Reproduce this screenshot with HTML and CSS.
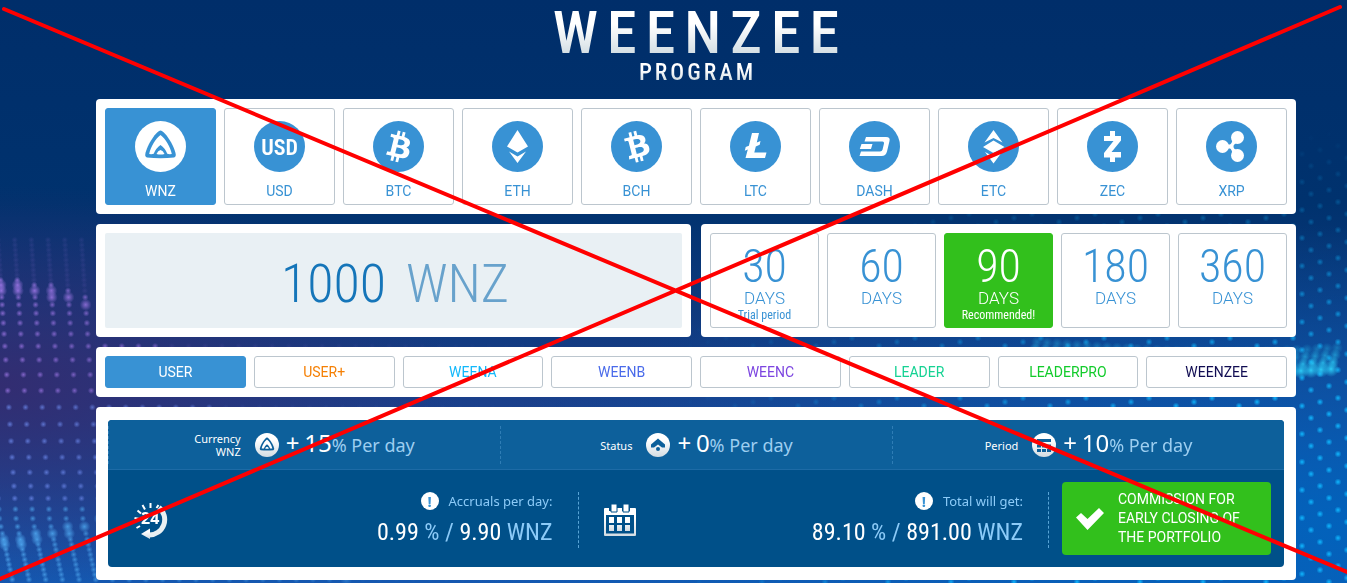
FILE: index.html
```
<!DOCTYPE html>
<html lang="en">

<head>
    <meta charset="UTF-8">
    <meta name="viewport" content="width=device-width, initial-scale=1.0">
    <title>Weenzee Program</title>
    <link rel="stylesheet" href="styles.css">
</head>

<body>
    <canvas class="dots" id="dots"></canvas>

    <!-- Shared shapes -->
    <svg class="defs" width="0" height="0" aria-hidden="true">
        <defs>
            <linearGradient id="silver" x1="0" y1="0" x2="0" y2="1">
                <stop offset="0.3" stop-color="#fff" />
                <stop offset="1" stop-color="#d3dce2" />
            </linearGradient>
            <path id="bitcoin" d="M23.189 14.02c.314-2.096-1.283-3.223-3.465-3.975l.708-2.84-1.728-.43-.69 2.765c-.454-.114-.92-.22-1.385-.326l.695-2.783L15.596 6l-.708 2.839c-.376-.086-.746-.17-1.104-.26l.002-.009-2.384-.595-.46 1.846s1.283.294 1.256.312c.7.175.826.638.805 1.006l-.806 3.235c.048.012.11.03.18.057l-.183-.045-1.13 4.532c-.086.212-.303.531-.793.41.018.025-1.256-.313-1.256-.313l-.858 1.978 2.25.561c.418.105.828.215 1.231.318l-.715 2.872 1.727.43.708-2.84c.472.127.93.245 1.378.357l-.706 2.828 1.728.43.715-2.866c2.948.558 5.164.333 6.097-2.333.752-2.146-.037-3.385-1.588-4.192 1.13-.26 1.98-1.003 2.207-2.538zm-3.95 5.538c-.533 2.147-4.148.986-5.32.695l.95-3.805c1.172.293 4.929.872 4.37 3.11zm.535-5.569c-.487 1.953-3.495.96-4.47.717l.86-3.45c.975.243 4.118.696 3.61 2.733z" />
            <g id="weenzee">
                <path class="mark" d="M25.5 9.500C21.500 9.500 12 24 10.300 33Q9.800 36 12 36.400Q25.500 38 39 36.400Q41.200 36 40.700 33C39 24 29.500 9.500 25.500 9.500Z" />
                <path class="hole" d="M25.500 14C21 17 15.500 26 14.200 33Q17 33.400 18.700 32.800Q21 27 25.500 24Q30 27 32.300 32.800Q34 33.400 36.800 33C35.500 26 30 17 25.500 14Z" />
                <path class="hole" d="M21.500 33Q23 29.500 25.500 29Q28 29.500 29.500 33Q25.500 34 21.500 33Z" />
            </g>
        </defs>
    </svg>

    <header class="header">
        <h1 class="title">WEENZEE</h1>
        <p class="subtitle">PROGRAM</p>
    </header>

    <main class="calc">
        <!-- Currency -->
        <section class="panel coins">
            <button type="button" class="option coin active">
                <svg class="coin-icon" viewBox="0 0 51 51"><circle cx="25.5" cy="25.5" r="25.5" /><use href="#weenzee" /></svg>
                WNZ
            </button>
            <button type="button" class="option coin">
                <svg class="coin-icon" viewBox="0 0 51 51"><circle cx="25.5" cy="25.5" r="25.5" /><text class="mark" x="25.5" y="34" text-anchor="middle">USD</text></svg>
                USD
            </button>
            <button type="button" class="option coin">
                <svg class="coin-icon" viewBox="0 0 32 32"><circle cx="16" cy="16" r="16" /><use class="mark" href="#bitcoin" /></svg>
                BTC
            </button>
            <button type="button" class="option coin">
                <svg class="coin-icon" viewBox="0 0 51 51"><circle cx="25.5" cy="25.5" r="25.5" /><path class="mark" d="M25.5 9L36 25.500L25.500 31.500L15 25.500ZM17 30.500L25.500 35.500L34 30.500L25.500 42Z" /></svg>
                ETH
            </button>
            <button type="button" class="option coin">
                <svg class="coin-icon" viewBox="0 0 32 32"><circle cx="16" cy="16" r="16" /><use class="mark" href="#bitcoin" transform="rotate(-28 16 16)" /></svg>
                BCH
            </button>
            <button type="button" class="option coin">
                <svg class="coin-icon" viewBox="0 0 51 51"><circle cx="25.5" cy="25.5" r="25.5" /><path class="mark" d="M22 12H29L26.800 21.500L30.500 20L29.700 23.800L25.800 25.500L24.300 31.500H36.500L35 37H15.500L17.800 28.500L14.800 29.700L15.700 26L18.900 24.700Z" /></svg>
                LTC
            </button>
            <button type="button" class="option coin">
                <svg class="coin-icon" viewBox="0 0 51 51"><circle cx="25.5" cy="25.5" r="25.5" /><path class="mark" d="M17 16H37Q41.500 16 40.500 20L38 30.500Q36.800 35 32.500 35H10.500L12 30.500H31Q33 30.500 33.500 28.800L35 22.500Q35.300 20.600 33.500 20.600H15.500ZM12.500 23H23.500L22 28H10.800Z" /></svg>
                DASH
            </button>
            <button type="button" class="option coin">
                <svg class="coin-icon" viewBox="0 0 51 51"><circle cx="25.5" cy="25.5" r="25.5" /><path class="mark" d="M25.500 9L34.500 21.500L25.500 17L16.500 21.500ZM25.500 19.500L36.500 26L25.500 32L15 26ZM17 31L25.500 35.500L34 31L25.500 42.500Z" /></svg>
                ETC
            </button>
            <button type="button" class="option coin">
                <svg class="coin-icon" viewBox="0 0 51 51"><circle cx="25.5" cy="25.5" r="25.5" /><path class="mark" d="M23 10H28V15H34V19.500L24.500 31H34V36.500H28V41H23V36.500H17V32L26.500 20H17V15H23Z" /></svg>
                ZEC
            </button>
            <button type="button" class="option coin">
                <svg class="coin-icon" viewBox="0 0 51 51"><circle cx="25.5" cy="25.5" r="25.5" /><g class="mark"><circle cx="16.500" cy="25.500" r="6.500" /><circle cx="31.500" cy="16.500" r="6.500" /><circle cx="31.500" cy="34.500" r="6.500" /><path d="M20 23.500H24Q26 22.500 26.500 18L31 22Q27.500 23 27.500 25.500Q27.500 28 31 29L26.500 33Q26 28.500 24 27.500H20Z" /></g></svg>
                XRP
            </button>
        </section>

        <div class="split">
            <!-- Amount -->
            <section class="panel">
                <label class="amount">
                    <input type="text" class="amount-value" value="1000" size="4" aria-label="Amount">
                    <span class="amount-unit">WNZ</span>
                </label>
            </section>

            <!-- Period -->
            <section class="panel periods">
                <button type="button" class="option period"><b>30</b><span>DAYS</span><small>Trial period</small></button>
                <button type="button" class="option period"><b>60</b><span>DAYS</span></button>
                <button type="button" class="option period recommended"><b>90</b><span>DAYS</span><small>Recommended!</small></button>
                <button type="button" class="option period"><b>180</b><span>DAYS</span></button>
                <button type="button" class="option period"><b>360</b><span>DAYS</span></button>
            </section>
        </div>

        <!-- Status -->
        <section class="panel statuses">
            <button type="button" class="option status active">USER</button>
            <button type="button" class="option status user-plus">USER+</button>
            <button type="button" class="option status weena">WEENA</button>
            <button type="button" class="option status weenb">WEENB</button>
            <button type="button" class="option status weenc">WEENC</button>
            <button type="button" class="option status leader">LEADER</button>
            <button type="button" class="option status leaderpro">LEADERPRO</button>
            <button type="button" class="option status weenzee">WEENZEE</button>
        </section>

        <!-- Result -->
        <section class="panel result-panel">
            <div class="result">
                <div class="rates">
                    <div class="rate">
                        <span class="rate-name">Currency<br>WNZ</span>
                        <svg class="rate-icon" viewBox="0 0 51 51"><circle cx="25.5" cy="25.5" r="25.5" /><use href="#weenzee" /></svg>
                        <span class="rate-value">+ <b>15</b>% Per day</span>
                    </div>
                    <div class="rate">
                        <span class="rate-name">Status</span>
                        <svg class="rate-icon" viewBox="0 0 24 24"><circle cx="12" cy="12" r="12" /><path class="mark" d="M12 5.500L19 11.500V14.500H16L12 11.500L8 14.500H5V11.500Z" /><circle class="mark" cx="12" cy="16" r="2" /></svg>
                        <span class="rate-value">+ <b>0</b>% Per day</span>
                    </div>
                    <div class="rate">
                        <span class="rate-name">Period</span>
                        <svg class="rate-icon" viewBox="0 0 24 24"><circle cx="12" cy="12" r="12" /><path class="mark" d="M5 6H19V9H5ZM5 11.500H9V14.500H5ZM10 11.500H14V14.500H10ZM15 11.500H19V14.500H15ZM5 16H9V19H5ZM10 16H14V19H10ZM15 16H19V19H15Z" /></svg>
                        <span class="rate-value">+ <b>10</b>% Per day</span>
                    </div>
                </div>

                <div class="totals">
                    <div class="total">
                        <svg class="total-icon" viewBox="0 0 36 38">
                            <path class="ray" d="M17.500 2V7M9.500 4L12 8.500M25.500 4L23.500 7M4.500 9.500L8 12.500M1.500 17L6.500 18M3.500 27L7 25" />
                            <path class="ring" d="M26 6.500A15.500 15.500 0 0 1 16 34" />
                            <path fill="url(#silver)" d="M17 27.500V38L8 33Z" />
                            <text x="8" y="23">24</text>
                        </svg>
                        <div class="total-text">
                            <p class="total-name"><i class="info">!</i>Accruals per day:</p>
                            <p class="total-value"><b>0.99</b> % / <b>9.90</b> WNZ</p>
                        </div>
                    </div>
                    <div class="total">
                        <svg class="total-icon calendar" viewBox="0 0 32 32">
                            <path fill="url(#silver)" fill-rule="evenodd" d="M0 5Q0 4 1 4H5V7H13V4H18V7H26V4H31Q32 4 32 5V31Q32 32 31 32H1Q0 32 0 31ZM2 11V29.500H30V11Z" />
                            <path fill="#fff" stroke="#005089" d="M7 0H13V8H7ZM19 0H25V8H19Z" />
                            <path fill="url(#silver)" d="M5 13H10V19H5ZM13 13H18V19H13ZM21 13H26V19H21ZM5 21H10V27H5ZM13 21H18V27H13ZM21 21H26V27H21Z" />
                        </svg>
                        <div class="total-text">
                            <p class="total-name"><i class="info">!</i>Total will get:</p>
                            <p class="total-value"><b>89.10</b> % / <b>891.00</b> WNZ</p>
                        </div>
                    </div>
                    <button type="button" class="commission">
                        <svg class="check" viewBox="0 0 28 22"><path d="M0 9.500L5 5L11.500 11L23 0L28 5L11.500 22Z" /></svg>
                        <span>COMMISSION FOR EARLY CLOSING OF THE PORTFOLIO</span>
                    </button>
                </div>
            </div>
        </section>
    </main>

    <!-- Crossed out -->
    <svg class="cross" viewBox="0 0 1347 583" preserveAspectRatio="none" aria-hidden="true">
        <path d="M4 9L1347 572M1340 7L0 579" />
    </svg>

    <script src="script.js"></script>
</body>

</html>
```
FILE: styles.css
```
:root {
    --blue: #3892d4;
    --green: #32c01c;
    --line: #bcc6ce;
    --pale: #8ccbf8;
    --silver: linear-gradient(#fff 35%, #cfdbe1 90%);
    --mark: #3892d4;
    --narrow: "Roboto Condensed", Roboto, sans-serif;
    --label: Roboto, sans-serif;
    --text: "Noto Sans", sans-serif;
}

* {
    margin: 0;
    padding: 0;
    box-sizing: border-box;
}

body {
    position: relative;
    min-height: 100vh;
    padding: 3px 51px 3px 96px;
    overflow: hidden;
    font-family: var(--text);
    background:
        radial-gradient(ellipse 460px 200px at 0 66%, rgba(52, 44, 112, 0.95), transparent),
        radial-gradient(ellipse 900px 300px at 100% 90%, rgba(0, 100, 190, 0.9), transparent),
        linear-gradient(#002e6a 0, #00326e 35%, #1a3f8a 68%, #1558b0 100%);
}

button,
input {
    font: inherit;
    color: inherit;
    border: none;
    background: none;
}

button {
    cursor: pointer;
}

b,
i {
    font-weight: normal;
    font-style: normal;
}

.dots,
.cross {
    position: absolute;
    top: 0;
    left: 0;
    width: 100%;
    height: 100%;
    pointer-events: none;
}

.defs {
    position: absolute;
}

.cross path {
    fill: none;
    stroke: #f00;
    stroke-width: 4;
    stroke-linecap: round;
}

.header {
    position: relative;
    height: 96px;
    text-align: center;
    font-family: var(--narrow);
    font-weight: 500;
}

.title,
.subtitle {
    color: transparent;
    background: var(--silver);
    -webkit-background-clip: text;
    background-clip: text;
}

.title {
    font-size: 60px;
    line-height: 60px;
    letter-spacing: 9px;
    padding-left: 9px;
    font-weight: 500;
}

.subtitle {
    font-size: 23px;
    line-height: 20px;
    letter-spacing: 3px;
    padding-left: 3px;
}

.calc {
    position: relative;
    display: flex;
    flex-direction: column;
    gap: 10px;
}

.panel {
    padding: 9px;
    border-radius: 4px;
    background: #fff;
}

.coins,
.periods,
.statuses {
    display: grid;
    grid-auto-flow: column;
    grid-auto-columns: minmax(0, 1fr);
    gap: 8px;
}

.option {
    color: var(--blue);
    font-family: var(--label);
    border: 1px solid var(--line);
    border-radius: 3px;
}

.option.active {
    color: #fff;
    background: var(--blue);
    border-color: var(--blue);
}

.coin {
    display: flex;
    flex-direction: column;
    align-items: center;
    gap: 9px;
    padding: 12px 0 3px;
    font-size: 14px;
    line-height: 20px;
}

.coin-icon {
    width: 51px;
    height: 51px;
    fill: var(--blue);
}

.coin-icon .mark {
    fill: #fff;
}

.coin-icon text {
    font: 600 22px var(--narrow);
}

.coin.active .coin-icon {
    fill: #fff;
}

#weenzee .mark {
    fill: var(--mark);
}

#weenzee .hole {
    fill: #fff;
}

.split {
    display: grid;
    grid-template-columns: 1fr 1fr;
    gap: 10px;
}

.amount {
    display: flex;
    align-items: center;
    justify-content: center;
    gap: 20px;
    height: 95px;
    padding-top: 6px;
    border-radius: 2px;
    background: #e9f0f4;
    color: #1575b9;
    font-family: var(--narrow);
    font-size: 54px;
    font-weight: 300;
}

.amount-value {
    width: 2em;
    text-align: right;
    outline: none;
}

.amount-unit {
    color: #68a2cc;
}

.period {
    display: flex;
    flex-direction: column;
    align-items: center;
    padding-top: 10px;
}

.period b {
    font-family: var(--narrow);
    font-size: 46px;
    font-weight: 300;
    line-height: 44px;
}

.period span {
    font-size: 17px;
    font-weight: 300;
    line-height: 20px;
}

.period small {
    font-family: var(--narrow);
    font-size: 12px;
    line-height: 14px;
}

.recommended {
    color: #fff;
    background: var(--green);
    border-color: var(--green);
}

.status {
    height: 32px;
    font-size: 14px;
}

.user-plus {
    color: #f58005;
}

.weena {
    color: #12b8fb;
}

.weenb {
    color: #4a6bea;
}

.weenc {
    color: #7c45e0;
}

.leader {
    color: #15d293;
}

.leaderpro {
    color: #12cb2b;
}

.weenzee {
    color: #100c52;
}

.result-panel {
    padding: 13px 12px;
}

.result {
    border-radius: 4px;
    overflow: hidden;
    background: #005089;
}

.rates {
    display: grid;
    grid-template-columns: repeat(3, 1fr);
    padding: 6px 0 5px;
    background: #0d609b;
    border-bottom: 1px solid #1d6ba6;
    --mark: #0d609b;
}

.rate {
    display: flex;
    align-items: center;
    justify-content: center;
    height: 38px;
    border-left: 1px dashed #2f7db5;
}

.rate-name {
    color: #fff;
    font-size: 11px;
    line-height: 13px;
    text-align: right;
    margin-right: 14px;
}

.rate-icon {
    width: 24px;
    height: 24px;
    margin-right: 7px;
    fill: url(#silver);
}

.rate-icon .mark {
    fill: var(--mark);
}

.rate-value {
    display: block;
    color: #9dcef0;
    font-size: 18px;
    line-height: 24px;
    padding-bottom: 3px;
    white-space: pre;
}

.rate-value::first-letter {
    color: #fff;
    font-size: 24px;
}

.rate-value b {
    color: #fff;
    font-size: 24px;
}

.totals {
    display: flex;
    padding: 12px 13px 12px 0;
}

.total {
    flex: 1;
    display: flex;
    align-items: center;
    justify-content: space-between;
    margin: 10px 0 7px;
    padding: 0 25px;
    border-right: 1px dashed #58a4d6;
}

.total-icon {
    width: 36px;
    height: 38px;
}

.total-icon.calendar {
    width: 32px;
    height: 32px;
}

.total-icon text {
    fill: #fff;
    font: bold 16px var(--text);
}

.ray,
.ring {
    fill: none;
    stroke: #fff;
    stroke-width: 2;
}

.ring {
    stroke: #e9eff2;
    stroke-width: 5;
}

.total-text {
    text-align: right;
    color: var(--pale);
}

.total-name {
    display: flex;
    align-items: center;
    justify-content: flex-end;
    gap: 10px;
    margin-bottom: 7px;
    font-size: 13px;
    line-height: 18px;
}

.info {
    width: 18px;
    height: 18px;
    border-radius: 50%;
    background: #fff;
    color: var(--blue);
    font-size: 15px;
    font-weight: bold;
    text-align: center;
}

.total-value {
    font-family: var(--narrow);
    font-size: 24px;
    line-height: 31px;
}

.total-value b {
    color: #fff;
}

.commission {
    display: flex;
    align-items: center;
    gap: 14px;
    width: 209px;
    height: 73px;
    margin-left: 13px;
    padding: 0 14px;
    border-radius: 4px;
    background: var(--green);
    color: #fff;
    font-family: var(--label);
    font-size: 14px;
    line-height: 19px;
    text-align: left;
}

.check {
    flex: none;
    width: 28px;
    height: 22px;
    fill: #fff;
}
```
FILE: script.js
```
const canvas = document.getElementById('dots');
const ctx = canvas.getContext('2d');

function dot(x, y, r, color, alpha) {
    const g = ctx.createRadialGradient(x, y, 0, x, y, r * 2);
    g.addColorStop(0, color);
    g.addColorStop(1, color + '00');
    ctx.globalAlpha = Math.max(0, Math.min(1, alpha));
    ctx.fillStyle = g;
    ctx.fillRect(x - r * 2, y - r * 2, r * 4, r * 4);
}

// purple wave on the left
function leftWave(h) {
    for (let i = -3; i < 34; i++) {
        const crest = 287 + Math.max(0, i) * Math.max(0, i) * 0.8;
        const foot = 541 - Math.max(0, i) * 4;
        const fade = 1 - i / 36;
        let y = 240;
        while (y < h) {
            const x = 1 + i * 16.7 + (y - 287) * 0.065 + Math.max(0, y - 520) * 0.15;
            const big = Math.abs(y - crest) < 4 || Math.abs(y - foot) < 5;
            const color = y > 505 ? '#4fa8f0' : y > 400 ? '#6f8cf0' : '#a078e8';
            const alpha = y < crest - 10 ? 0.15 : big ? 0.9 : 0.75;
            dot(x, y, big ? 3 : 1.7, color, alpha * fade);
            y += 5 + 12 * Math.max(0, Math.sin(Math.PI * (y - 280) / 260));
        }
    }
}

// cyan wave on the right
function rightWave(w, h) {
    for (let i = -40; i < 60; i++) {
        for (let j = 0; j < 40; j++) {
            const x = w - i * 18 + j * 9;
            const y = 130 + j * 12 + i * 4;
            if (x < w * 0.5 || x > w + 5 || y < 110) continue;
            const side = Math.min(1, (x - w * 0.5) / (w * 0.4));
            dot(x, y, 1.8, '#10b8ff', side * (y - 130) / 280);
        }
    }
    // bright crest
    for (let x = w - 310; x < w; x += 10) {
        for (let k = 0; k < 4; k++) {
            const y = 342 + k * 7 + 10 * Math.sin((x - w + 310) / 120);
            dot(x - k * 2, y, k === 3 ? 4 : 3, '#2fd8ff', 0.3 + k * 0.2);
        }
    }
}

function draw() {
    canvas.width = canvas.clientWidth;
    canvas.height = canvas.clientHeight;
    leftWave(canvas.height);
    rightWave(canvas.width, canvas.height);
}

window.addEventListener('resize', draw);
draw();
```
